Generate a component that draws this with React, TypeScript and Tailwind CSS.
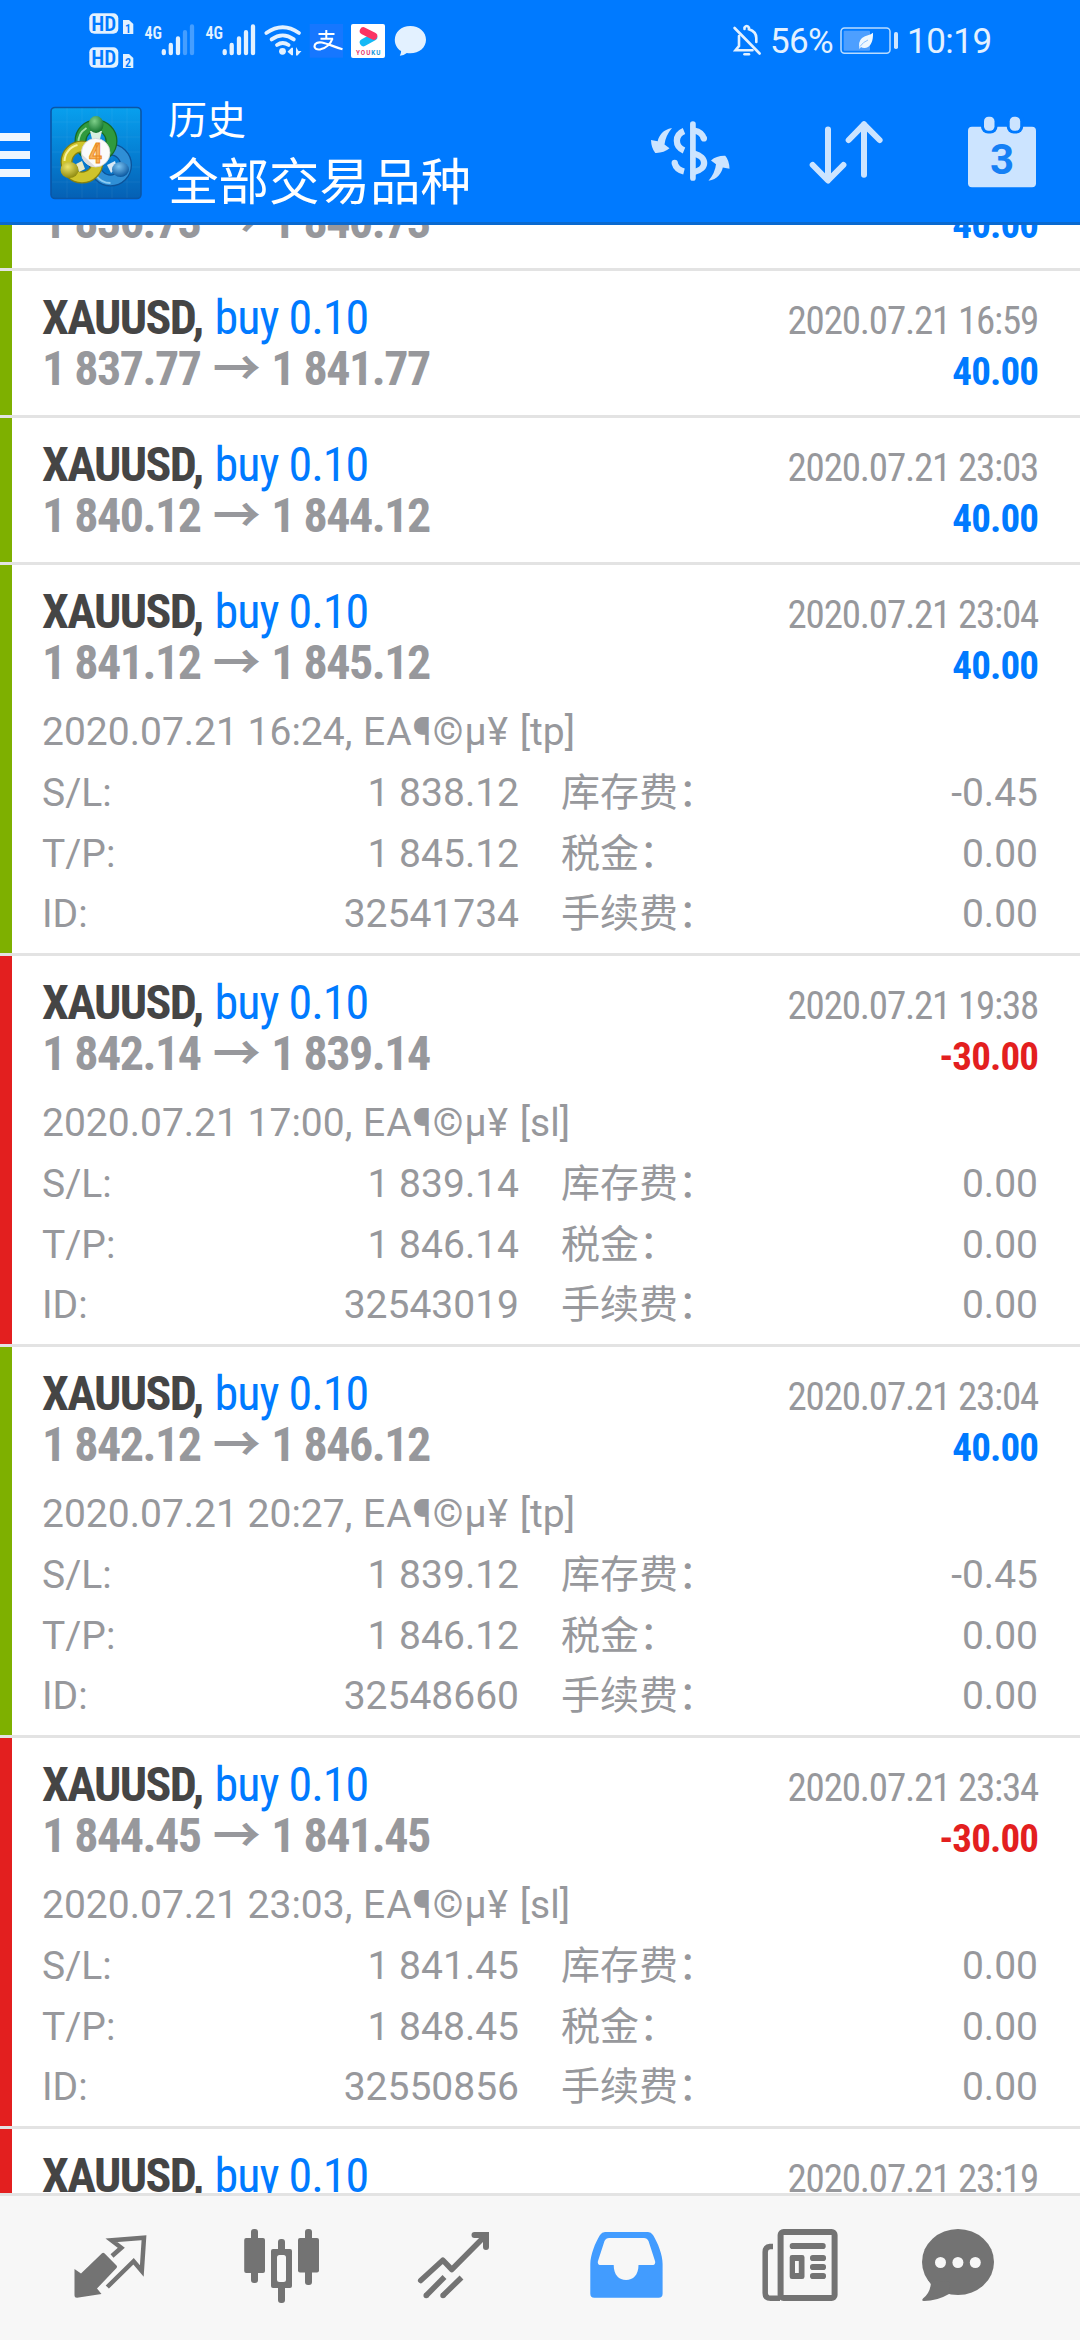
import React from 'react';
import clsx from 'clsx';

interface DealDetails {
  opened: string;
  closedBy: 'tp' | 'sl';
  sl: string;
  tp: string;
  id: string;
  swap: string;
}

interface Deal {
  open: string;
  close: string;
  time?: string; // missing when the title line is scrolled out of view
  profit: number;
  details?: DealDetails;
}

const DEALS: Deal[] = [
  { open: '1 836.73', close: '1 840.73', profit: 40 },
  { open: '1 837.77', close: '1 841.77', time: '2020.07.21 16:59', profit: 40 },
  { open: '1 840.12', close: '1 844.12', time: '2020.07.21 23:03', profit: 40 },
  {
    open: '1 841.12', close: '1 845.12', time: '2020.07.21 23:04', profit: 40,
    details: { opened: '2020.07.21 16:24', closedBy: 'tp', sl: '1 838.12', tp: '1 845.12', id: '32541734', swap: '-0.45' },
  },
  {
    open: '1 842.14', close: '1 839.14', time: '2020.07.21 19:38', profit: -30,
    details: { opened: '2020.07.21 17:00', closedBy: 'sl', sl: '1 839.14', tp: '1 846.14', id: '32543019', swap: '0.00' },
  },
  {
    open: '1 842.12', close: '1 846.12', time: '2020.07.21 23:04', profit: 40,
    details: { opened: '2020.07.21 20:27', closedBy: 'tp', sl: '1 839.12', tp: '1 846.12', id: '32548660', swap: '-0.45' },
  },
  {
    open: '1 844.45', close: '1 841.45', time: '2020.07.21 23:34', profit: -30,
    details: { opened: '2020.07.21 23:03', closedBy: 'sl', sl: '1 841.45', tp: '1 848.45', id: '32550856', swap: '0.00' },
  },
];

// Only the title line of the next deal fits above the tab bar
const NEXT_DEAL_TIME = '2020.07.21 23:19';

function StatusIcons() {
  return (
    <svg className="w-[360px] h-20" viewBox="80 0 360 80" fill="#e3f1ff">
      {/* HD badges for both SIM cards */}
      <rect x="89.3" y="13.3" width="29" height="20.4" rx="5" />
      <rect x="89.3" y="47.3" width="29" height="20.4" rx="5" />
      <path d="M123 20h6l4.300 4v10h-10.300z" />
      <path d="M123 54h6l4.300 4v10h-10.300z" />
      <g fill="#007aff" fontFamily="Roboto Condensed, Roboto, sans-serif" fontWeight="600">
        <text x="91.3" y="30.5" fontSize="20" textLength="25" lengthAdjust="spacingAndGlyphs">HD</text>
        <text x="91.3" y="64.5" fontSize="20" textLength="25" lengthAdjust="spacingAndGlyphs">HD</text>
        <text x="125" y="32.5" fontSize="12">1</text>
        <text x="125" y="66.5" fontSize="12">2</text>
      </g>
      <g fontFamily="Roboto Condensed, Roboto, sans-serif" fontWeight="600" fontSize="19">
        <text x="144.5" y="38.6" textLength="17.5" lengthAdjust="spacingAndGlyphs">4G</text>
        <text x="205.5" y="38.6" textLength="17.5" lengthAdjust="spacingAndGlyphs">4G</text>
      </g>
      {/* signal bars */}
      <g stroke="#e3f1ff" strokeWidth="4.3" strokeLinecap="round">
        <path d="M163.8 51.2v2M170.8 44.9v8.3M178 38.5v14.7" />
        <path d="M185 32.2v21M192 26.5v26.7" opacity="0.3" />
        <path d="M224.7 51.2v2M231.7 44.9v8.3M239 38.5v14.7M246 32.2v21M253 26.5v26.7" />
      </g>
      {/* wifi */}
      <g fill="none" stroke="#e3f1ff" strokeWidth="3.8" strokeLinecap="round">
        <path d="M266.3 33Q282.7 21.4 299 33" />
        <path d="M271.6 39.4Q282.7 31.4 293.8 39.4" />
        <path d="M277 45Q282.7 41 288.6 45" />
      </g>
      <circle cx="282.5" cy="51.3" r="3.4" />
      <path d="M287.5 51.8l4-4h1.5v7.5h-1.5zM296 47v8.5h1.5l4-4.5h-3z" />
      {/* payment app */}
      <rect x="309.7" y="24" width="33.3" height="33.7" fill="#1677ff" />
      <g fill="none" stroke="#fff">
        <path d="M326.300 30v8.500M318.500 34h16M320.500 38.700h12.500" strokeWidth="2" />
        <path d="M332.500 38.500c-1.800 5-6.500 9.500-12 10.800c-4 .7-6-.8-6-3.100c0-3 3.500-4.400 7.500-3.700c6 1.200 11.500 4.200 20.500 6.800" strokeWidth="2.200" />
      </g>
      {/* video app */}
      <rect x="351" y="24" width="34" height="34" rx="2" fill="#fff" />
      <path d="M363.500 42.500L373.500 37" stroke="#14b9f5" strokeWidth="7.500" strokeLinecap="round" />
      <path d="M363.500 31L373.500 36" stroke="#fb3463" strokeWidth="7.500" strokeLinecap="round" />
      <text x="356" y="54.800" fontSize="6.300" fontWeight="700" fontFamily="Roboto, sans-serif" textLength="24.500">
        <tspan fill="#e83a6e">YOU</tspan>
        <tspan fill="#1597dc">KU</tspan>
      </text>
      {/* message bubble */}
      <path d="M410.300 26c9 0 15.700 6 15.700 13.700s-6.700 13.600-15.700 13.600q-2 0-3.500-.3q-3 2.500-7 2.700q1.500-2 1.300-4.600c-4-2.500-6.300-6.600-6.300-11.400c0-7.700 6.500-13.700 15.500-13.700z" />
    </svg>
  );
}

function MutedBellIcon() {
  return (
    <svg className="w-[28px] h-20" viewBox="733 0 28 80" fill="none" stroke="#e3f1ff" strokeWidth="2.600" strokeLinecap="round">
      <path d="M734.600 28l25 25.500" />
      <path d="M739 36v10l-3.500 4.300h17" />
      <path d="M744.500 29v-1.500q2.200-3 4.400 0v1.800c4.500 1.400 7.400 4.600 7.400 8.700v4" />
      <path d="M744.500 54.200h4.500" />
    </svg>
  );
}

function BatteryIcon() {
  return (
    <svg className="w-[60px] h-20" viewBox="839 0 60 80">
      <rect x="841" y="28" width="49" height="25.200" rx="3.500" fill="none" stroke="#b9dcff" strokeWidth="1.500" />
      <rect x="843.700" y="30.700" width="26.300" height="20" rx="1" fill="#4d9fff" />
      <rect x="894" y="32" width="4" height="17" rx="1.800" fill="#cfe6ff" />
      <path d="M873 32.700c.3 8-2 14.500-8 15.200q-2.600.2-4-1l-1.500 2.200q-1.500-7.500 2.500-11q3-2.200 6-2.800q3-.8 5-2.600z" fill="#eff8ff" />
      <path d="M860 46.500q3-4.500 8-6.500" fill="none" stroke="#8cc2ff" strokeWidth="1" />
    </svg>
  );
}

function AppLogo() {
  return (
    <svg className="w-[92px] h-[94px]" viewBox="50 106 92 94">
      <defs>
        <linearGradient id="tile" x1="0" y1="0" x2="0" y2="1">
          <stop offset="0" stopColor="#08a0ee" />
          <stop offset="0.5" stopColor="#0580d4" />
          <stop offset="1" stopColor="#0560b4" />
        </linearGradient>
        <radialGradient id="green" cx="0.4" cy="0.3" r="0.7">
          <stop offset="0" stopColor="#7fd08a" />
          <stop offset="1" stopColor="#13742e" />
        </radialGradient>
        <radialGradient id="yellow" cx="0.4" cy="0.3" r="0.7">
          <stop offset="0" stopColor="#eee66a" />
          <stop offset="1" stopColor="#8f8a10" />
        </radialGradient>
        <radialGradient id="blue" cx="0.4" cy="0.3" r="0.7">
          <stop offset="0" stopColor="#7cc4f2" />
          <stop offset="1" stopColor="#0b58a0" />
        </radialGradient>
      </defs>
      <rect x="51" y="107.500" width="90" height="91" rx="4" fill="url(#tile)" stroke="#0a56a6" strokeWidth="1.600" />
      <path d="M67 108v90M82 108v90M97 108v90M112 108v90M127 108v90M52 122h88M52 137h88M52 152h88M52 167h88M52 182h88" stroke="#fff" strokeWidth="0.500" opacity="0.100" />
      <g fill="none">
        <circle cx="110.500" cy="165" r="15.500" stroke="#0c5298" strokeWidth="12" />
        <circle cx="110.500" cy="165" r="15.500" stroke="#2f8fd6" strokeWidth="9.500" />
        <path d="M96.500 176a17 17 0 0 0 14 7" stroke="#8acbf2" strokeWidth="2" />
        <circle cx="96" cy="141" r="15.500" stroke="#176a26" strokeWidth="12" />
        <circle cx="96" cy="141" r="15.500" stroke="#2f9a3e" strokeWidth="9.500" />
        <path d="M78.500 144a17 17 0 0 1 8-16" stroke="#a2dfa6" strokeWidth="2" />
        <circle cx="82" cy="162" r="15.500" stroke="#84800f" strokeWidth="12" />
        <circle cx="82" cy="162" r="15.500" stroke="#cfc42b" strokeWidth="9.500" />
        <path d="M64.500 161a17 17 0 0 1 13-16" stroke="#f6f2a0" strokeWidth="2" />
      </g>
      <path d="M90 131h12l-2 8h-8z" fill="#d9efe0" />
      <path d="M76 164l6-3 3 8-6 3z" fill="#e9e9c6" />
      <path d="M107 165l8-4 2 7-6 5z" fill="#d8e9f6" />
      <ellipse cx="96" cy="124.500" rx="7.500" ry="8.500" fill="url(#green)" />
      <ellipse cx="69.500" cy="170" rx="9" ry="8" fill="url(#yellow)" />
      <ellipse cx="120.500" cy="169.500" rx="8.500" ry="7.500" fill="url(#blue)" />
      <circle cx="95.700" cy="152.700" r="14.300" fill="#fbfbfb" stroke="#cfd2d4" strokeWidth="0.800" />
      <path d="M81.500 154a14.300 14.300 0 0 0 14.200 13z" fill="#dcdcdc" />
      <text x="95.500" y="162.500" textAnchor="middle" fontSize="27" fontWeight="600" fontFamily="Roboto Condensed, Roboto, sans-serif" fill="#fbb25a" stroke="#e98a1c" strokeWidth="0.900">4</text>
    </svg>
  );
}

function Header() {
  return (
    <header className="h-[225px] shrink-0 bg-[#007aff] border-b-[3px] border-[#0a69cf] text-white">
      <div className="h-20 flex items-start text-[#e3f1ff] text-[35px] leading-[84px]">
        <div className="w-20" />
        <StatusIcons />
        <div className="flex ml-[293px]">
          <MutedBellIcon />
          <span className="w-[69px] ml-[9px] tracking-[-0.700px]">56%</span>
          <BatteryIcon />
          <span className="ml-2 tracking-[-0.500px]">10:19</span>
        </div>
      </div>

      <div className="flex items-start pr-[42px]">
        <div className="flex flex-col gap-2.5 mt-[53px]">
          <div className="w-[30px] h-2 bg-[#eef6ff]" />
          <div className="w-[30px] h-2 bg-[#eef6ff]" />
          <div className="w-[30px] h-2 bg-[#eef6ff]" />
        </div>
        <div className="ml-5 mt-[26px]">
          <AppLogo />
        </div>
        <div className="ml-[26px] mt-[11px] leading-[61px]">
          <div className="text-[39px]">历史</div>
          <div className="text-[50.500px]">全部交易品种</div>
        </div>

        <div className="flex ml-auto gap-[76px] mt-7">
          <svg className="w-21 h-21" viewBox="648 108 84 84" fill="none" stroke="#cce4ff" strokeWidth="6.300">
            <path d="M692.900 124v54" strokeWidth="5.700" strokeLinecap="round" />
            <path d="M694 130.500c6 1 9 4.500 10 8.500" />
            <circle cx="703.900" cy="138.500" r="3.100" fill="#cce4ff" stroke="none" />
            <path d="M684 131c-9.500 4-9.500 15.500 0 19.500" />
            <path d="M674.600 163c1 4 4.500 7.300 9.400 8.500" />
            <circle cx="674.700" cy="162.800" r="3.100" fill="#cce4ff" stroke="none" />
            <path d="M694 153.500c13.500 3.500 13.500 15.500 0 18.500" />
            <g fill="#cce4ff" stroke="none">
              <path d="M672 128c-9 1.500-13 7.500-14.300 13.300L651 140q.3 8.500 4.300 12.900q8.500.3 14.200-4.600L664.500 144.500q.8-8.500 7.500-16.500z" />
              <path transform="rotate(180 690.250 154.350)" d="M672 128c-9 1.500-13 7.500-14.300 13.300L651 140q.3 8.500 4.300 12.900q8.500.3 14.200-4.600L664.500 144.500q.8-8.500 7.500-16.500z" />
            </g>
          </svg>
          <svg className="w-[76px] h-21" viewBox="808 108 76 84" fill="none" stroke="#cce4ff" strokeWidth="6" strokeLinecap="round" strokeLinejoin="round">
            <path d="M828 129.500v50.500M812.700 165L828 180.500L843.400 165" />
            <path d="M864 174.800v-50.500M848.700 140L864 124.300L879.600 140" />
          </svg>
          <svg className="w-[72px] h-21 ml-1.5" viewBox="966 108 72 84">
            <rect x="968" y="126.700" width="68" height="60.600" rx="4" fill="#cce4ff" />
            <rect x="981" y="110" width="16.500" height="23.500" rx="7" fill="#007aff" />
            <rect x="1006.700" y="110" width="16.500" height="23.500" rx="7" fill="#007aff" />
            <rect x="984" y="116.700" width="10.500" height="14" rx="4.500" fill="#cce4ff" />
            <rect x="1009.700" y="116.700" width="10.500" height="14" rx="4.500" fill="#cce4ff" />
            <text x="1002" y="174" textAnchor="middle" fontSize="42" fontWeight="700" fontFamily="Roboto, sans-serif" fill="#1580f5">3</text>
          </svg>
        </div>
      </div>
    </header>
  );
}

function DetailCell({ label, value }: { label: string; value: string }) {
  return (
    <div className="flex justify-between">
      <span>{label}</span>
      <span>{value}</span>
    </div>
  );
}

function DealTitle({ time }: { time?: string }) {
  return (
    <div className="h-[51px] flex justify-between items-baseline font-['Roboto_Condensed',Roboto,sans-serif] text-[48px] leading-[51px]">
      {time && (
        <>
          <div>
            <span className="font-bold text-[#454545] tracking-[-1.600px]">XAUUSD, </span>
            <span className="ml-[2.500px] text-[#007aff] tracking-[-1px]">buy 0.10</span>
          </div>
          <div className="text-[39px] tracking-[-1.200px]">{time}</div>
        </>
      )}
    </div>
  );
}

function DealRow({ deal }: { deal: Deal }) {
  const { open, close, time, profit, details } = deal;
  const won = profit > 0;

  return (
    <div className="shrink-0 border-b-[3px] border-[#e3e3e3]">
      <div className={clsx(
        'border-l-[12px] pl-[30px] pr-[42px] pt-[21px] text-[#97989c]',
        details ? 'h-[388px]' : 'h-36',
        won ? 'border-[#7eb000]' : 'border-[#e31f1f]',
      )}>
        <DealTitle time={time} />
        <div className="h-[51px] flex justify-between items-baseline font-['Roboto_Condensed',Roboto,sans-serif] font-bold text-[48px] leading-[51px]">
          <div className="tracking-[-1.500px]">
            {open} <span className="mx-[2.500px] leading-[36px] font-['Noto_Sans_CJK_SC',sans-serif]">→</span> {close}
          </div>
          <div className={clsx('text-[39px] tracking-[-0.900px]', won ? 'text-[#007aff]' : 'text-[#e31f1f]')}>
            {profit.toFixed(2)}
          </div>
        </div>

        {details && (
          <div className="pt-[14.400px] text-[39px] leading-[60.670px]">
            <div>
              {details.opened},<span className="tracking-[1px]"> EA¶©µ¥ </span>[{details.closedBy}]
            </div>
            <div className="grid grid-cols-2 gap-x-[42px]">
              <DetailCell label="S/L:" value={details.sl} />
              <DetailCell label="库存费：" value={details.swap} />
              <DetailCell label="T/P:" value={details.tp} />
              <DetailCell label="税金：" value="0.00" />
              <DetailCell label="ID:" value={details.id} />
              <DetailCell label="手续费：" value="0.00" />
            </div>
          </div>
        )}
      </div>
    </div>
  );
}

function TabBar() {
  return (
    <nav className="h-[147px] shrink-0 flex gap-[76px] pl-[62px] bg-[#f7f7f7] border-t-[3px] border-[#e3e3e3] text-[#737373]">
      {/* quotes */}
      <svg className="w-24 h-36" viewBox="62 2196 96 144">
        <path d="M74.500 2269L81 2273.500L102 2253.300q1.200-1 2.400 0L116.500 2265.500q1 1.200 0 2.400L97 2288.500L101.500 2294L77 2297.700q-2.500 0-2.500-2.500z" fill="currentColor" />
        <path d="M112 2256L121.300 2247.800L111.500 2240.300L144 2237.700L141.800 2271L133.600 2261.200L107.300 2287" fill="none" stroke="currentColor" strokeWidth="4.500" />
      </svg>
      {/* chart */}
      <svg className="w-24 h-36" viewBox="234 2196 96 144" fill="currentColor">
        <rect x="244.200" y="2238" width="20.800" height="35" rx="2" />
        <rect x="251" y="2229" width="7" height="54" rx="3" />
        <rect x="271" y="2249" width="21" height="39" rx="2" />
        <rect x="278" y="2239" width="7" height="64" rx="3" />
        <rect x="277" y="2255" width="9" height="27" rx="2.500" fill="#f7f7f7" />
        <rect x="298" y="2238" width="21" height="34.500" rx="2" />
        <rect x="305" y="2229" width="7" height="56" rx="3" />
      </svg>
      {/* trade */}
      <svg className="w-24 h-36" viewBox="406 2196 96 144" fill="none" stroke="currentColor" strokeWidth="5.500">
        <path d="M420.700 2280.500L442.800 2260.200L451.800 2269.500L485 2236" strokeLinecap="round" strokeLinejoin="round" />
        <path d="M474.500 2235H486V2247" strokeWidth="6" strokeLinecap="round" />
        <path d="M426.200 2295.500L444.500 2277M443 2295.500L461.500 2277.500" />
        <path d="M426.200 2295.500v0M443 2295.500v0" strokeLinecap="round" />
      </svg>
      {/* history, active tab */}
      <svg className="w-24 h-36 text-[#429cff]" viewBox="578 2196 96 144">
        <path
          fill="currentColor"
          fillRule="evenodd"
          d="M590.300 2264C590.500 2255 595 2243 600 2235Q602 2232 605 2232H648Q651 2232 653 2235C658 2243 662.600 2255 662.600 2264V2293.700q0 4-4 4H594.300q-4 0-4-4ZM609 2238Q606 2238 604.500 2241L598 2261Q597 2265 601 2265H613.700C613.700 2275 619 2280 626.100 2280C633 2280 638.500 2275 638.500 2265H652Q656 2265 655 2261L648.500 2241Q647 2238 644 2238Z"
        />
      </svg>
      {/* news */}
      <svg className="w-24 h-36" viewBox="750 2196 96 144" fill="none" stroke="currentColor">
        <rect x="780.600" y="2232" width="54" height="66" rx="3" strokeWidth="6" />
        <path d="M773 2246.500H770q-4.800.5-4.800 5.500V2293q0 5.300 5.500 5.300H780" strokeWidth="5.500" />
        <g fill="currentColor" stroke="none">
          <rect x="789.700" y="2243" width="36" height="6" rx="2.800" />
          <path fillRule="evenodd" d="M792 2255h10.200q2.300 0 2.300 2.300v19.400q0 2.300-2.300 2.300H792q-2.300 0-2.300-2.300v-19.400q0-2.300 2.300-2.300zM795 2261v12h3.800v-12z" />
          <rect x="810" y="2255" width="16" height="6" rx="2.800" />
          <rect x="810" y="2264" width="16" height="6" rx="2.800" />
          <rect x="810" y="2273" width="16" height="6" rx="2.800" />
        </g>
      </svg>
      {/* messages */}
      <svg className="w-24 h-36 -ml-3" viewBox="910 2196 96 144">
        <ellipse cx="958" cy="2262" rx="36" ry="33" fill="currentColor" />
        <path d="M928 2280L930.800 2284Q930 2293 923 2298.500Q921 2301 924 2301Q937 2301 949 2294L950 2282z" fill="currentColor" />
        <circle cx="940.500" cy="2262.500" r="5.500" fill="#f7f7f7" />
        <circle cx="957.900" cy="2262.500" r="5.500" fill="#f7f7f7" />
        <circle cx="975.300" cy="2262.500" r="5.500" fill="#f7f7f7" />
      </svg>
    </nav>
  );
}

export default function App() {
  return (
    <div lang="zh-CN" className="w-[1080px] h-[2340px] flex flex-col overflow-hidden bg-white font-[Roboto,'Noto_Sans_CJK_SC',sans-serif]">
      <Header />
      <main className="flex-1 min-h-0 overflow-hidden">
        {/* list is scrolled part way through the first deal */}
        <div className="flex flex-col -mt-[101px]">
          {DEALS.map((deal) => (
            <DealRow key={deal.open} deal={deal} />
          ))}
          <div className="h-36 border-l-[12px] border-[#e31f1f] pl-[30px] pr-[42px] pt-[21px] text-[#97989c]">
            <DealTitle time={NEXT_DEAL_TIME} />
          </div>
        </div>
      </main>
      <TabBar />
    </div>
  );
}
